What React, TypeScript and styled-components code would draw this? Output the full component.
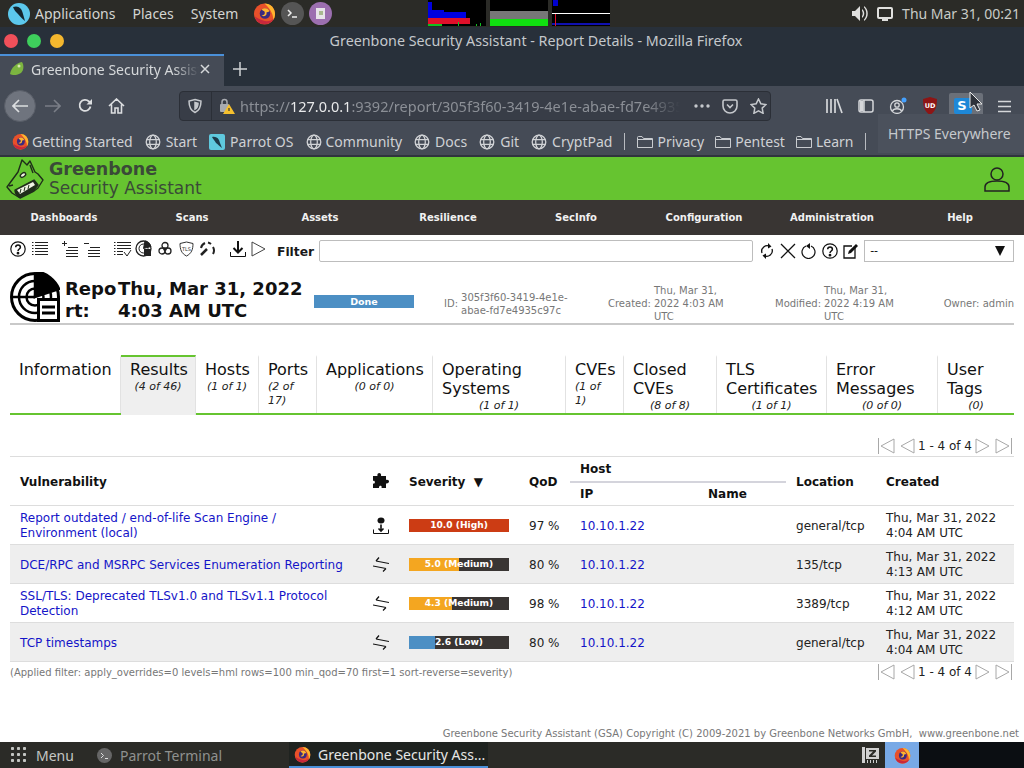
import React from 'react';
import styled, { createGlobalStyle } from 'styled-components';

const GlobalStyle = createGlobalStyle`
  html, body { margin: 0; padding: 0; background: #fff; }
  * { box-sizing: border-box; }
`;

const Screen = styled.div`
  position: relative;
  width: 1024px;
  height: 768px;
  overflow: hidden;
  display: flex;
  flex-direction: column;
  font-family: "DejaVu Sans", sans-serif;
`;

/* ---- desktop panel ---- */
const TopPanel = styled.div`
  height: 27px;
  flex: none;
  display: flex;
  align-items: center;
  background: #2b2b27;
  color: #d3d5d2;
  font: 14px "Noto Sans", sans-serif;
  padding-left: 8px;
`;
const PanelLabel = styled.span<{ $gap: number; $ml?: number }>`
  margin-right: ${p => p.$gap}px;
  margin-left: ${p => p.$ml ?? 0}px;
`;
const Launchers = styled.div`
  display: flex;
  align-items: center;
  gap: 5px;
  margin-left: 2px;
`;
const Graphs = styled.div`
  display: flex;
  gap: 4px;
  margin-left: 96px;
  align-self: flex-start;
`;
const Graph = styled.svg`
  display: block;
  width: 58px;
  height: 26px;
  background: #000;
`;
const PanelRight = styled.div`
  margin-left: auto;
  display: flex;
  align-items: center;
  gap: 9px;
  padding-right: 4px;
  color: #c9cbc8;
`;

/* ---- firefox window ---- */
const TitleBar = styled.div`
  height: 27px;
  flex: none;
  background: #28303a;
  display: flex;
  align-items: center;
  position: relative;
  padding-left: 4px;
  gap: 9px;
`;
const Dot = styled.span<{ $c: string }>`
  width: 14px;
  height: 14px;
  border-radius: 50%;
  background: ${p => p.$c};
`;
const WindowTitle = styled.div`
  position: absolute;
  left: 0;
  right: 0;
  top: 4px;
  text-align: center;
  padding-left: 48px;
  color: #c4c8cc;
  font: 14.3px "Noto Sans", sans-serif;
`;
const TabStrip = styled.div`
  height: 32px;
  flex: none;
  background: #28303a;
  display: flex;
  align-items: stretch;
`;
const BrowserTab = styled.div`
  width: 224px;
  background: #454b56;
  border-top: 2px solid #4a90d9;
  display: flex;
  align-items: center;
  padding: 0 0 4px 9px;
  color: #d5d8da;
  font: 14px "Noto Sans", sans-serif;
  white-space: nowrap;
  overflow: hidden;
`;
const TabLabel = styled.span`
  width: 168px;
  margin-left: 6px;
  overflow: hidden;
  -webkit-mask-image: linear-gradient(to right, #000 85%, transparent 100%);
  mask-image: linear-gradient(to right, #000 85%, transparent 100%);
`;
const NewTab = styled.div`
  display: flex;
  align-items: center;
  margin-left: 9px;
  padding-bottom: 2px;
`;
const NavBar = styled.div`
  height: 40px;
  flex: none;
  background: #454b56;
  display: flex;
  align-items: center;
  padding-left: 4px;
`;
const BackButton = styled.div`
  width: 32px;
  height: 32px;
  border-radius: 50%;
  background: #6f747e;
  border: 1px solid #585d67;
  display: flex;
  align-items: center;
  justify-content: center;
`;
const NavIcon = styled.div<{ $ml: number }>`
  margin-left: ${p => p.$ml}px;
  display: flex;
  align-items: center;
`;
const UrlBox = styled.div`
  margin-left: 54px;
  width: 592px;
  height: 30px;
  background: #383d47;
  border: 1px solid #2b2f37;
  border-radius: 4px;
  display: flex;
  align-items: center;
  padding-left: 7px;
`;
const UrlDivider = styled.span`
  width: 1px;
  height: 28px;
  background: #2b2f37;
  margin: 0 7px 0 8px;
`;
const UrlText = styled.div`
  margin-left: 5px;
  width: 440px;
  overflow: hidden;
  white-space: nowrap;
  font: 14.5px "Noto Sans", sans-serif;
  color: #8b8f96;
  -webkit-mask-image: linear-gradient(to right, #000 92%, transparent 100%);
  mask-image: linear-gradient(to right, #000 92%, transparent 100%);
  b { font-weight: 400; color: #e8e9ea; }
`;
const UrlActions = styled.div`
  display: flex;
  align-items: center;
  gap: 12px;
  margin-left: 14px;
  color: #c5c8cc;
`;
const ToolIcons = styled.div`
  margin-left: 47px;
  display: flex;
  align-items: center;
`;
const ToolIcon = styled.div<{ $ml?: number }>`
  width: 32px;
  height: 26px;
  margin-left: ${p => p.$ml ?? 0}px;
  display: flex;
  align-items: center;
  justify-content: center;
`;
const ActiveToolIcon = styled.div`
  width: 34px;
  height: 26px;
  margin-left: 3px;
  padding-left: 3px;
  display: flex;
  align-items: center;
  background: #6b7079;
  border-radius: 2px;
`;
const Bookmarks = styled.div`
  height: 31px;
  flex: none;
  background: #454b56;
  border-bottom: 2px solid #30343d;
  display: flex;
  align-items: center;
  padding: 2px 0 0 12px;
  color: #cfd1d4;
  font: 14px "Noto Sans", sans-serif;
  white-space: nowrap;
`;
const Bookmark = styled.div<{ $gap?: number; $mr?: number }>`
  display: flex;
  align-items: center;
  gap: ${p => p.$gap ?? 5}px;
  margin-right: ${p => p.$mr ?? 12}px;
`;
const BookmarkSep = styled.span`
  width: 1px;
  height: 17px;
  background: #b8bbc0;
  margin: 0 12px 0 0;
`;
const Tooltip = styled.div`
  position: absolute;
  left: 878px;
  top: 114px;
  width: 146px;
  height: 39px;
  background: #4b515c;
  color: #c6c9cd;
  font: 14px "Noto Sans", sans-serif;
  padding: 10px 0 0 10px;
`;
const Pointer = styled.svg`
  position: absolute;
  left: 969px;
  top: 91px;
`;

/* ---- GSA page ---- */
const Page = styled.div`
  flex: 1;
  min-height: 0;
  display: flex;
  flex-direction: column;
  background: #fff;
`;
const GsaHeader = styled.div`
  height: 43px;
  flex: none;
  background: #66c430;
  display: flex;
  align-items: center;
  padding: 0 14px 0 6px;
`;
const Brand = styled.div`
  margin-left: 5px;
  color: #3a4a38;
  line-height: 19px;
`;
const BrandTop = styled.div`
  font-size: 17.5px;
  font-weight: 700;
`;
const BrandBottom = styled.div`
  font-size: 17px;
`;
const UserSlot = styled.div`
  margin-left: auto;
  display: flex;
`;
const Menu = styled.div`
  height: 35px;
  flex: none;
  background: #393533;
  display: grid;
  grid-template-columns: repeat(8, 128px);
  align-items: center;
  text-align: center;
  color: #f1f1f1;
  font-size: 10px;
  font-weight: 700;
  padding-bottom: 1px;
`;
const Toolbar = styled.div`
  height: 33px;
  flex: none;
  display: flex;
  align-items: center;
  padding: 0 10px 1px;
`;
const ToolGroup = styled.div`
  display: flex;
  align-items: center;
  margin-bottom: 5px;
`;
const TbIcon = styled.div<{ $ml: number }>`
  margin-left: ${p => p.$ml}px;
  display: flex;
`;
const FilterLabel = styled.label`
  margin: 2px 0 0 11px;
  font-size: 12.3px;
  font-weight: 700;
  color: #1a1a1a;
`;
const FilterInput = styled.div`
  margin: 0 0 1px 5px;
  width: 434px;
  height: 22px;
  border: 1px solid #bdbdbd;
  border-radius: 2px;
  background: #fff;
`;
const FilterSelect = styled.div`
  margin: 0 0 1px 5px;
  flex: 1;
  height: 22px;
  border: 1px solid #bdbdbd;
  display: flex;
  align-items: center;
  justify-content: space-between;
  padding: 0 8px 0 5px;
  font-size: 11px;
`;
const ReportHead = styled.div`
  margin: 4px 10px 0;
  height: 53px;
  flex: none;
  border-bottom: 2px solid #c9c9c9;
  display: flex;
  align-items: center;
  padding-bottom: 1px;
`;
const HeadTitle = styled.div`
  display: flex;
  margin: 6px 0 0 5px;
  font-size: 18px;
  font-weight: 700;
  line-height: 22px;
  color: #111;
`;
const HeadWord = styled.div`
  width: 53px;
  word-break: break-all;
`;
const HeadDate = styled.div`
  width: 196px;
`;
const DoneBar = styled.div`
  width: 100px;
  height: 13px;
  background: #4c8fc4;
  color: #fff;
  font-size: 9.5px;
  font-weight: 700;
  line-height: 13px;
  text-align: center;
  margin-top: 8px;
`;
const MetaBlock = styled.div<{ $w: number; $ml: number }>`
  display: flex;
  align-items: center;
  width: ${p => p.$w}px;
  margin: 13px 0 0 ${p => p.$ml}px;
  gap: 3px;
  color: #777;
  font-size: 10px;
  line-height: 13px;
`;
const MetaValue = styled.div``;
const OwnerBlock = styled.div`
  margin: 13px 0 0 auto;
  white-space: nowrap;
  color: #777;
  font-size: 10px;
  line-height: 13px;
`;

const TabsRow = styled.div`
  margin: 30px 10px 0;
  height: 60px;
  flex: none;
  display: flex;
  border-bottom: 2px solid #66c430;
`;
const Tab = styled.div<{ $w: number; $active?: boolean; $last?: boolean }>`
  width: ${p => p.$w}px;
  flex: none;
  padding: 3px 4px 0 9px;
  margin-bottom: ${p => (p.$active ? '-2px' : '0')};
  font-size: 16px;
  line-height: 19px;
  color: #111;
  display: flex;
  flex-direction: column;
  border-right: ${p => (p.$last ? 'none' : '1px solid #e2e2e2')};
  background: ${p => (p.$active ? '#efefef' : 'transparent')};
  border-top: ${p => (p.$active ? '2px solid #66c430' : '2px solid transparent')};
`;
const TabCount = styled.div<{ $left?: boolean }>`
  font-size: 11px;
  font-style: italic;
  line-height: 14px;
  color: #222;
  text-align: ${p => (p.$left ? 'left' : 'center')};
  margin: 1px 5px 0 0;
`;
const Pager = styled.div<{ $mt: number }>`
  margin: ${p => p.$mt}px 12px 0 0;
  display: flex;
  justify-content: flex-end;
  align-items: center;
  height: 20px;
  flex: none;
  font-size: 12px;
  color: #222;
  gap: 1px;
`;
const PagerGap = styled.span`
  width: 3px;
`;
const PagerText = styled.span`
  margin: 0 2px;
`;
const Table = styled.table`
  margin: 0 10px;
  width: 1004px;
  flex: none;
  table-layout: fixed;
  border-collapse: collapse;
  font-size: 12px;
  color: #222;
  border-top: 1px solid #ddd;
`;
const Th = styled.th<{ $top?: number; $left?: number }>`
  padding: ${p => p.$top ?? 0}px 0 0 ${p => p.$left ?? 10}px;
  text-align: left;
  font-size: 12px;
  font-weight: 700;
  color: #111;
`;
const HostTh = styled(Th)`
  border-bottom: 2px solid #d4d4dc;
  height: 25px;
`;
const HeadRow = styled.tr`
  height: 24px;
`;
const BodyRow = styled.tr<{ $alt?: boolean; $h: number }>`
  height: ${p => p.$h}px;
  background: ${p => (p.$alt ? '#eeeeee' : '#fff')};
  border-top: 1px solid #ddd;
  border-bottom: 1px solid #ddd;
`;
const Td = styled.td`
  padding: 2px 0 0 10px;
  line-height: 15px;
`;
const NameTd = styled(Td)`
  padding-right: 14px;
`;
const SevTd = styled(Td)`
  padding-top: 0;
`;
const IconTd = styled(Td)`
  padding: 0 0 0 11px;
  vertical-align: middle;
  svg { display: block; }
`;
const Link = styled.span`
  color: #1414c8;
`;
const SevTrack = styled.div`
  position: relative;
  width: 100px;
  height: 13px;
  background: #393533;
`;
const SevFill = styled.div<{ $c: string }>`
  height: 100%;
  background: ${p => p.$c};
`;
const SevText = styled.div`
  position: absolute;
  inset: 0;
  text-align: center;
  color: #fff;
  font-size: 9.1px;
  font-weight: 700;
  line-height: 13px;
`;
const BottomRow = styled.div`
  display: flex;
  align-items: center;
  justify-content: space-between;
  flex: none;
  height: 20px;
`;
const Applied = styled.div`
  margin-left: 10px;
  font-size: 10px;
  color: #777;
`;
const PageFooter = styled.div`
  margin-top: auto;
  text-align: right;
  padding: 0 5px 3px 0;
  font-size: 10px;
  color: #787878;
`;

/* ---- task bar ---- */
const Taskbar = styled.div`
  height: 26px;
  flex: none;
  background: #2b2b27;
  display: flex;
  align-items: center;
  color: #c4c6c3;
  font: 14px "Noto Sans", sans-serif;
`;
const TaskMenu = styled.div`
  display: flex;
  align-items: center;
  gap: 9px;
  padding-left: 11px;
  width: 92px;
`;
const TaskItem = styled.div<{ $active?: boolean; $w: number }>`
  width: ${p => p.$w}px;
  height: 26px;
  display: flex;
  align-items: center;
  gap: ${p => (p.$active ? 7 : 8)}px;
  padding-left: 5px;
  background: ${p => (p.$active ? '#1f2320' : 'transparent')};
  border-bottom: ${p => (p.$active ? '2px solid #4a90d9' : 'none')};
  color: ${p => (p.$active ? '#e6e7e6' : '#8f918f')};
`;
const Tray = styled.div`
  margin-left: auto;
  display: flex;
  align-items: center;
  height: 26px;
`;
const TrayFox = styled.div`
  width: 34px;
  height: 26px;
  background: #78a9e6;
  display: flex;
  align-items: center;
  justify-content: center;
  margin-left: 5px;
`;
const TrayRest = styled.div`
  width: 105px;
  height: 26px;
  background: #0b0e12;
`;

/* ---- drawings ---- */
const Firefox = ({ s = 24 }: { s?: number }) => (
  <svg width={s} height={s} viewBox="0 0 24 24">
    <circle cx="12" cy="12.5" r="11" fill="#e8502a" />
    <path d="M12 1.5c6.5 0 11 5 11 11 0 3-1 5-2 6.5 .6-5-2-11-9-17.500z" fill="#ffb52e" />
    <path d="M2 15c1 5 5 8 10 8s8-2 10-6c-3 3-8 4-12 2-3-1-5-2-8-4z" fill="#c8283c" />
    <circle cx="12.500" cy="12" r="5.500" fill="#3b2a7e" />
    <path d="M9 8c3-3 8-1 8 2l-3 1c1 3-2 5-5 3 3 0 4-2 3-4z" fill="#ffb52e" />
  </svg>
);

const Globe = () => (
  <svg width="16" height="16" viewBox="0 0 16 16" fill="none" stroke="#d0d2d5" strokeWidth="1.300">
    <circle cx="8" cy="8" r="6.800" />
    <ellipse cx="8" cy="8" rx="3.300" ry="6.800" />
    <path d="M1.500 5.600h13M1.500 10.400h13" />
  </svg>
);

const Folder = () => (
  <svg width="16" height="14" viewBox="0 0 16 14" fill="none" stroke="#c9ccd0" strokeWidth="1">
    <path d="M.5 12.500V2.500q0-1 1-1h3.500l1.500 2h9v9z" />
    <path d="M.5 4.500h15" />
  </svg>
);

const ParrotTile = () => (
  <svg width="16" height="16" viewBox="0 0 16 16">
    <rect width="16" height="16" rx="2" fill="#5fc9de" />
    <path d="M3 3c4-1 7 1 8 6l2 5c-3-2-4-4-6-5-1-2-3-4-4-6z" fill="#1d3a4a" />
  </svg>
);

const Shield = ({ c = '#c5c8cc' }: { c?: string }) => (
  <svg width="16" height="16" viewBox="0 0 16 16" fill="none" stroke={c} strokeWidth="1.500">
    <path d="M8 1.500l6 1.500c0 6-1.500 9.500-6 11.500C3.500 12.500 2 9 2 3z" />
    <path d="M8 4.500l3 .8c0 3-.8 4.700-3 5.900z" fill={c} />
  </svg>
);

const ListLines = () => (
  <svg width="16" height="16" viewBox="0 0 16 16" stroke="#222" strokeWidth="1">
    {[1.500, 4.500, 7.500, 10.500, 13.500].map(y => (
      <path key={y} d={`M0 ${y}h1.500M3 ${y}H16`} />
    ))}
  </svg>
);

const Help = () => (
  <svg width="16" height="16" viewBox="0 0 16 16" fill="none" stroke="#111" strokeWidth="1.200">
    <circle cx="8" cy="8" r="7.200" />
    <path d="M5.700 6.200c0-3 4.700-3 4.700 0 0 1.800-2.400 1.800-2.400 3.800" strokeWidth="1.500" />
    <circle cx="8" cy="12.200" r=".8" fill="#111" />
  </svg>
);

const PlusMinusList = ({ sign }: { sign: '+' | '-' }) => (
  <svg width="16" height="16" viewBox="0 0 16 16" stroke="#222" strokeWidth="1" fill="none">
    <path d={sign === '+' ? 'M0 2.500h5M2.500 0v5' : 'M0 2.500h5'} />
    {[6.500, 9.500, 12.500, 15.500].map(y => (
      <path key={y} d={`M${y < 8 ? 6 : 4} ${y}H16`} />
    ))}
  </svg>
);

const PuzzleIcon = () => (
  <svg width="16" height="16" viewBox="0 0 16 16" fill="#111">
    <path d="M0 4h4.500c-1-4 4.500-4 3.500 0H13v4c4-1 4 4 0 3.500V16H8.500c1-3-3-3-2.500 0H0v-4.500c2.500 1 2.500-3.500 0-2.500z" />
  </svg>
);

const LocalIcon = () => (
  <svg width="16" height="17" viewBox="0 0 16 17" fill="none" stroke="#111">
    <ellipse cx="8" cy="3.500" rx="3.500" ry="3" fill="#111" stroke="none" />
    <path d="M8 7.500v6M5.500 11.500L8 14l2.500-2.500" strokeWidth="1.600" />
    <path d="M.5 12.500v4h15v-4" />
  </svg>
);

const ExchangeIcon = () => (
  <svg width="16" height="15" viewBox="0 0 16 15" fill="none" stroke="#111" strokeWidth="1.200">
    <path d="M3 4l13 2.500M3 4l3-3.500M0 9l13 2.500M13 11.500l-3 3" />
  </svg>
);

const Triangle = ({ dir, bar }: { dir: 'l' | 'r'; bar?: boolean }) => (
  <svg width={bar ? 17 : 15} height="16" viewBox={`0 0 ${bar ? 17 : 15} 16`} fill="none" stroke="#a8a8a8">
    {dir === 'l' ? (
      <>
        {bar && <path d="M.5 0v16" />}
        <path d={`M${bar ? 16 : 14} 1L${bar ? 3 : 1} 8l13 7z`} />
      </>
    ) : (
      <>
        <path d="M1 1l13 7-13 7z" />
        {bar && <path d="M16.500 0v16" />}
      </>
    )}
  </svg>
);

const WolfLogo = () => (
  <svg width="38" height="40" viewBox="0 0 38 40" fill="none" stroke="#1f2d1a" strokeWidth="1.400" strokeLinejoin="round">
    <path d="M1 28L12 13 16 1l5 5 3-4 5 11 3 2 5 6-5 8-4 3-14 7-8-5z" fill="#66c430" />
    <path d="M9 31l19-10 4 5-5 6-14 6c-3-2-4-4-4-7z" fill="#1f2d1a" />
    <path d="M11 31l16-8 2 3-15 9z" fill="#f0f4e4" stroke="none" />
    <path d="M14 34l1-4M18 32l1-4M22 30l1-4" stroke="#1f2d1a" strokeWidth="1" />
    <ellipse cx="17" cy="16" rx="3" ry="1.800" fill="#f0f4e4" transform="rotate(-35 17 16)" />
    <path d="M3 27l4-1M24 6l3 8" />
  </svg>
);

const ReportIcon = () => (
  <svg width="50" height="50" viewBox="0 0 50 50" fill="none" stroke="#000" strokeWidth="2.500">
    <circle cx="25" cy="25" r="23.500" strokeWidth="3" />
    <circle cx="25" cy="25" r="16" />
    <circle cx="25" cy="25" r="8.500" />
    <path d="M1 25h24M25 1v24" />
    <path d="M25 25L27 0c9 0 19 9 22 17z" fill="#000" />
    <rect x="27" y="26" width="23" height="24" fill="#000" stroke="none" />
    <rect x="30" y="29" width="17" height="18" fill="#fff" stroke="none" />
    <path d="M32 35h13M32 41h13" strokeWidth="3" />
  </svg>
);

const severities = [
  { label: '10.0 (High)', pct: 100, color: '#cc3c14' },
  { label: '5.0 (Medium)', pct: 50, color: '#f4a620' },
  { label: '4.3 (Medium)', pct: 43, color: '#f4a620' },
  { label: '2.6 (Low)', pct: 26, color: '#4c8fc4' },
];

const rows = [
  {
    name: 'Report outdated / end-of-life Scan Engine / Environment (local)',
    local: true, qod: '97 %', loc: 'general/tcp', time: '4:04 AM UTC', h: 39,
  },
  {
    name: 'DCE/RPC and MSRPC Services Enumeration Reporting',
    qod: '80 %', loc: '135/tcp', time: '4:13 AM UTC', h: 39,
  },
  {
    name: 'SSL/TLS: Deprecated TLSv1.0 and TLSv1.1 Protocol Detection',
    qod: '98 %', loc: '3389/tcp', time: '4:12 AM UTC', h: 39,
  },
  {
    name: 'TCP timestamps',
    qod: '80 %', loc: 'general/tcp', time: '4:04 AM UTC', h: 39,
  },
];

const tabs = [
  { t: 'Information', w: 111 },
  { t: 'Results', c: '(4 of 46)', w: 75, active: true },
  { t: 'Hosts', c: '(1 of 1)', w: 63 },
  { t: 'Ports', c: '(2 of 17)', w: 58, left: true },
  { t: 'Applications', c: '(0 of 0)', w: 116 },
  { t: 'Operating Systems', c: '(1 of 1)', w: 133 },
  { t: 'CVEs', c: '(1 of 1)', w: 58, left: true },
  { t: 'Closed CVEs', c: '(8 of 8)', w: 93 },
  { t: 'TLS Certificates', c: '(1 of 1)', w: 110 },
  { t: 'Error Messages', c: '(0 of 0)', w: 111 },
  { t: 'User Tags', c: '(0)', w: 76, last: true },
];

const menuItems = ['Dashboards', 'Scans', 'Assets', 'Resilience', 'SecInfo', 'Configuration', 'Administration', 'Help'];

const PagerBar = ({ mt }: { mt: number }) => (
  <Pager $mt={mt}>
    <Triangle dir="l" bar />
    <PagerGap />
    <Triangle dir="l" />
    <PagerText>1 - 4 of 4</PagerText>
    <Triangle dir="r" />
    <PagerGap />
    <Triangle dir="r" bar />
  </Pager>
);

const App: React.FC = () => {
  return (
    <Screen>
      <GlobalStyle />
      <TopPanel>
        <svg width="22" height="22" viewBox="0 0 22 22">
          <circle cx="11" cy="11" r="11" fill="#5cc8ec" />
          <path d="M5 4c5-2 9 1 10 7l2 7c-3-2-5-5-7-7C8 9 6 7 5 4z" fill="#15252e" />
        </svg>
        <PanelLabel $gap={17} $ml={5}>Applications</PanelLabel>
        <PanelLabel $gap={17}>Places</PanelLabel>
        <PanelLabel $gap={13}>System</PanelLabel>
        <Launchers>
          <Firefox s={23} />
          <svg width="23" height="23" viewBox="0 0 23 23" fill="none">
            <circle cx="11.500" cy="11.500" r="11.500" fill="#555" />
            <path d="M7 8l3 3-3 3M11 15h5" stroke="#eee" strokeWidth="1.500" />
          </svg>
          <svg width="23" height="23" viewBox="0 0 23 23">
            <circle cx="11.500" cy="11.500" r="11.500" fill="#9c6fb0" />
            <rect x="7" y="6" width="9" height="11" fill="#e8e4ea" />
            <rect x="10" y="9" width="4" height="4" fill="#a8b890" />
          </svg>
        </Launchers>
        <Graphs>
          <Graph viewBox="0 0 58 26">
            <path d="M0 2h4v8h12v2h22v6H0z" fill="#0000e0" />
            <path d="M0 18h42v6H0z" fill="#e0102a" />
            <path d="M0 24h14v2H0zM30 22h1v4h-1zM48 24h1v2h-1zM52 23h1v3h-1z" fill="#10c020" />
          </Graph>
          <Graph viewBox="0 0 58 26">
            <path d="M0 11h58v8H0z" fill="#777" />
            <path d="M0 19h58v7H0z" fill="#10e010" />
          </Graph>
          <Graph viewBox="0 0 58 26">
            <path d="M1 0h5v6H1z" fill="#0000d0" />
            <path d="M0 13h58v1H0z" fill="#fff" />
            <path d="M0 23h58v2H0z" fill="#1010b0" />
            <path d="M3 14h1v12H3z" fill="#e0102a" />
          </Graph>
        </Graphs>
        <PanelRight>
          <svg width="16" height="15" viewBox="0 0 16 15" fill="#e0e0de">
            <path d="M0 5h3l5-5v15l-5-5H0z" />
            <path d="M10 3c3 2 3 7 0 9v-2c1-1 1-4 0-5z" />
            <path d="M12 0c5 3 5 12 0 15v-1.500c3-3 3-9 0-12z" />
          </svg>
          <svg width="16" height="14" viewBox="0 0 16 14" fill="none" stroke="#e0e0de" strokeWidth="2">
            <rect x="1" y="1" width="14" height="10" rx="1" />
            <path d="M5 13h6" />
          </svg>
          <span>Thu Mar 31, 00:21</span>
        </PanelRight>
      </TopPanel>

      <TitleBar>
        <Dot $c="#f0505a" />
        <Dot $c="#3ecf5c" />
        <Dot $c="#f4b72e" />
        <WindowTitle>Greenbone Security Assistant - Report Details - Mozilla Firefox</WindowTitle>
      </TitleBar>

      <TabStrip>
        <BrowserTab>
          <svg width="16" height="16" viewBox="0 0 16 16">
            <path d="M1 13C2 7 7 2 13 1c2 3 2 8-1 11-3 2-8 3-11 1z" fill="#7cb540" />
            <circle cx="10" cy="5" r="1.500" fill="#d8e8b0" />
          </svg>
          <TabLabel>Greenbone Security Assistant</TabLabel>
          <svg width="12" height="12" viewBox="0 0 12 12" stroke="#d5d8da" strokeWidth="1.500">
            <path d="M2 2l8 8M10 2l-8 8" />
          </svg>
        </BrowserTab>
        <NewTab>
          <svg width="14" height="14" viewBox="0 0 14 14" stroke="#cfd2d5" strokeWidth="1.500">
            <path d="M7 0v14M0 7h14" />
          </svg>
        </NewTab>
      </TabStrip>

      <NavBar>
        <BackButton>
          <svg width="16" height="14" viewBox="0 0 16 14" fill="none" stroke="#dcdee0" strokeWidth="1.700">
            <path d="M16 7H1M7 1L1 7l6 6" />
          </svg>
        </BackButton>
        <NavIcon $ml={9}>
          <svg width="16" height="14" viewBox="0 0 16 14" fill="none" stroke="#7a7e87" strokeWidth="1.600">
            <path d="M0 7h15M9 1l6 6-6 6" />
          </svg>
        </NavIcon>
        <NavIcon $ml={16}>
          <svg width="16" height="16" viewBox="0 0 16 16" fill="none" stroke="#dcdee0" strokeWidth="1.800">
            <path d="M13.500 8.500A5.500 5.500 0 1 1 12 3.500L14 5.500" />
            <path d="M15 1v5.500H9.500z" fill="#dcdee0" stroke="none" />
          </svg>
        </NavIcon>
        <NavIcon $ml={15}>
          <svg width="17" height="16" viewBox="0 0 17 16" fill="none" stroke="#dcdee0" strokeWidth="1.600">
            <path d="M1 8l7.500-7L16 8M3.500 6.500V15h3.500v-5h3v5h3.500V6.500" />
          </svg>
        </NavIcon>
        <UrlBox>
          <Shield />
          <UrlDivider />
          <svg width="16" height="16" viewBox="0 0 16 16">
            <rect x="1" y="6" width="9" height="8" rx="1" fill="#a8abb0" />
            <path d="M3 6V4a2.500 2.500 0 0 1 5 0v2" fill="none" stroke="#a8abb0" strokeWidth="1.500" />
            <path d="M10 6l6 10H4z" fill="#f5c02e" />
            <path d="M10 10v3" stroke="#333" strokeWidth="1.200" />
          </svg>
          <UrlText>
            https://<b>127.0.0.1</b>:9392/report/305f3f60-3419-4e1e-abae-fd7e4935c97c
          </UrlText>
          <UrlActions>
            <svg width="16" height="4" viewBox="0 0 16 4" fill="#c5c8cc">
              <circle cx="2" cy="2" r="1.700" />
              <circle cx="8" cy="2" r="1.700" />
              <circle cx="14" cy="2" r="1.700" />
            </svg>
            <svg width="16" height="15" viewBox="0 0 16 15" fill="none" stroke="#c5c8cc" strokeWidth="1.600">
              <path d="M1 2.500q0-1.500 1.500-1.500h11q1.500 0 1.500 1.500V7a7 7 0 0 1-14 0z" />
              <path d="M5 5.500L8 8.500l3-3" />
            </svg>
            <svg width="17" height="16" viewBox="0 0 17 16" fill="none" stroke="#c5c8cc" strokeWidth="1.500">
              <path d="M8.500 1l2.300 4.700 5.200.8-3.800 3.600.9 5.200-4.600-2.500-4.600 2.500.9-5.200L1 6.500l5.200-.8z" />
            </svg>
          </UrlActions>
        </UrlBox>
        <ToolIcons>
          <ToolIcon>
            <svg width="18" height="16" viewBox="0 0 18 16" stroke="#d5d7da" strokeWidth="1.700">
              <path d="M2 1v14M6 1v14M10 1v14M12 1l5 14" />
            </svg>
          </ToolIcon>
          <ToolIcon>
            <svg width="16" height="14" viewBox="0 0 16 14" fill="none" stroke="#d5d7da" strokeWidth="1.500">
              <rect x="1" y="1" width="14" height="12" rx="2" />
              <path d="M6 1v12" />
              <path d="M2 2h3.500v10H2z" fill="#d5d7da" stroke="none" />
            </svg>
          </ToolIcon>
          <ToolIcon>
            <svg width="18" height="18" viewBox="0 0 18 18" fill="none" stroke="#d5d7da" strokeWidth="1.300">
              <circle cx="8" cy="10" r="6.500" />
              <circle cx="8" cy="8" r="2.200" />
              <path d="M3.500 14c1-3 8-3 9 0" />
              <circle cx="15" cy="3" r="2.500" fill="#45a1ff" stroke="none" />
            </svg>
          </ToolIcon>
          <ToolIcon>
            <svg width="16" height="18" viewBox="0 0 16 18">
              <path d="M1 2l7-2 7 2c0 8-2 13-7 16C3 15 1 10 1 2z" fill="#8e1515" />
              <text x="8" y="11" textAnchor="middle" fontSize="6.500" fontWeight="700" fill="#fff" fontFamily="DejaVu Sans">UD</text>
            </svg>
          </ToolIcon>
          <ActiveToolIcon>
            <svg width="22" height="20" viewBox="0 0 22 20">
              <rect x="2" y="2" width="18" height="16" rx="2" fill="#1e88d8" />
              <text x="10" y="14" textAnchor="middle" fontSize="13" fontWeight="700" fill="#fff" fontFamily="DejaVu Sans">S</text>
            </svg>
          </ActiveToolIcon>
          <ToolIcon $ml={5}>
            <svg width="15" height="13" viewBox="0 0 15 13" stroke="#d5d7da" strokeWidth="1.700">
              <path d="M1 1.500h13M1 6.500h13M1 11.500h13" />
            </svg>
          </ToolIcon>
        </ToolIcons>
      </NavBar>

      <Bookmarks>
        <Bookmark $gap={3}>
          <Firefox s={17} />
          Getting Started
        </Bookmark>
        <Bookmark><Globe />Start</Bookmark>
        <Bookmark><ParrotTile />Parrot OS</Bookmark>
        <Bookmark $gap={4}><Globe />Community</Bookmark>
        <Bookmark><Globe />Docs</Bookmark>
        <Bookmark><Globe />Git</Bookmark>
        <Bookmark><Globe />CryptPad</Bookmark>
        <BookmarkSep />
        <Bookmark $gap={4} $mr={11}><Folder />Privacy</Bookmark>
        <Bookmark $gap={4} $mr={11}><Folder />Pentest</Bookmark>
        <Bookmark $gap={4}><Folder />Learn</Bookmark>
        <BookmarkSep />
      </Bookmarks>

      <Page>
        <GsaHeader>
          <WolfLogo />
          <Brand>
            <BrandTop>Greenbone</BrandTop>
            <BrandBottom>Security Assistant</BrandBottom>
          </Brand>
          <UserSlot>
            <svg width="26" height="26" viewBox="0 0 26 26" fill="none" stroke="#222" strokeWidth="1.500">
              <circle cx="13" cy="8" r="6" />
              <path d="M1 25v-4c0-4 5-6 12-6s12 2 12 6v4z" />
            </svg>
          </UserSlot>
        </GsaHeader>

        <Menu>
          {menuItems.map(m => <div key={m}>{m}</div>)}
        </Menu>

        <Toolbar>
          <ToolGroup>
            <Help />
            <TbIcon $ml={6}><ListLines /></TbIcon>
            <TbIcon $ml={14}><PlusMinusList sign="+" /></TbIcon>
            <TbIcon $ml={6}><PlusMinusList sign="-" /></TbIcon>
            <TbIcon $ml={14}>
              <svg width="18" height="16" viewBox="0 0 18 16" fill="none" stroke="#222">
                {[1.500, 4.500, 7.500].map(y => <path key={y} d={`M0 ${y}h1.500M3 ${y}H17`} />)}
                <path d="M0 10.500h1.500M3 10.500h6M0 13.500h1.500M3 13.500h6M10 11l3 4 4-6" />
              </svg>
            </TbIcon>
            <TbIcon $ml={3}>
              <svg width="17" height="17" viewBox="0 0 17 17" fill="none" stroke="#222">
                <circle cx="8.500" cy="8.500" r="7.500" strokeWidth="1.300" />
                <circle cx="8.500" cy="8.500" r="4.500" />
                <path d="M8.500 8.500L10 1c3 .5 5 3 6 5.500z" fill="#222" />
                <rect x="9" y="9" width="7" height="7" fill="#222" stroke="none" />
              </svg>
            </TbIcon>
            <TbIcon $ml={6}>
              <svg width="14" height="15" viewBox="0 0 14 15" fill="none" stroke="#222" strokeWidth="1.300">
                <circle cx="7" cy="4.500" r="3" />
                <circle cx="4" cy="10" r="3" />
                <circle cx="10" cy="10" r="3" />
                <circle cx="7" cy="8" r="1.200" fill="#222" />
              </svg>
            </TbIcon>
            <TbIcon $ml={7}>
              <svg width="15" height="16" viewBox="0 0 15 16" fill="none" stroke="#333">
                <path d="M7.500 1l6.500 1.500c0 6-1.500 10-6.500 12.500C2.500 12.500 1 8.500 1 2.500z" />
                <text x="7.500" y="9.500" textAnchor="middle" fontSize="5" stroke="none" fill="#333" fontFamily="DejaVu Sans">TLS</text>
              </svg>
            </TbIcon>
            <TbIcon $ml={5}>
              <svg width="16" height="16" viewBox="0 0 16 16" fill="none" stroke="#222" strokeWidth="2">
                <path d="M2 7a7 7 0 0 1 4-5M9 1.500a7 7 0 0 1 3 1.500M14 6a7 7 0 0 1 0 7" />
                <path d="M2 14l6-6" strokeWidth="2.500" />
              </svg>
            </TbIcon>
            <TbIcon $ml={15}>
              <svg width="16" height="16" viewBox="0 0 16 16" fill="none" stroke="#111">
                <path d="M8 0v11M3.500 7L8 11.500 12.500 7" strokeWidth="2" />
                <path d="M.5 11v4.500h15V11" />
              </svg>
            </TbIcon>
            <TbIcon $ml={5}>
              <svg width="15" height="16" viewBox="0 0 15 16" fill="none" stroke="#444">
                <path d="M1 1l13 7-13 7z" />
              </svg>
            </TbIcon>
          </ToolGroup>
          <FilterLabel>Filter</FilterLabel>
          <FilterInput />
          <TbIcon $ml={6}>
            <svg width="16" height="16" viewBox="0 0 16 16" fill="none" stroke="#111" strokeWidth="1.300">
              <path d="M3 10a5.500 5.500 0 0 1 8-6.500M13 6a5.500 5.500 0 0 1-8 6.500" />
              <path d="M9 0l3.500 3.500L9 5.500M7 16l-3.500-3.500L7 10.500" fill="#111" stroke="none" />
            </svg>
          </TbIcon>
          <TbIcon $ml={5}>
            <svg width="16" height="16" viewBox="0 0 16 16" stroke="#111" strokeWidth="1.300">
              <path d="M1 1l14 14M15 1L1 15" />
            </svg>
          </TbIcon>
          <TbIcon $ml={5}>
            <svg width="16" height="16" viewBox="0 0 16 16" fill="none" stroke="#111" strokeWidth="1.200">
              <path d="M5 3a6.500 6.500 0 1 0 5 0" />
              <path d="M9 0L5 3l4 3" fill="#111" stroke="none" />
            </svg>
          </TbIcon>
          <TbIcon $ml={5}><Help /></TbIcon>
          <TbIcon $ml={5}>
            <svg width="16" height="16" viewBox="0 0 16 16" fill="none" stroke="#111" strokeWidth="1.300">
              <path d="M12 4v11H1V3h8" />
              <path d="M5 11l.8-3L13 1l2 2-7 7z" fill="#111" stroke="none" />
            </svg>
          </TbIcon>
          <FilterSelect>
            <span>--</span>
            <svg width="10" height="10" viewBox="0 0 10 10"><path d="M0 0h10L5 10z" fill="#111" /></svg>
          </FilterSelect>
        </Toolbar>

        <ReportHead>
          <ReportIcon />
          <HeadTitle>
            <HeadWord>Report:</HeadWord>
            <HeadDate>Thu, Mar 31, 2022 4:03 AM UTC</HeadDate>
          </HeadTitle>
          <DoneBar>Done</DoneBar>
          <MetaBlock $w={130} $ml={30}>
            <span>ID:</span>
            <MetaValue>305f3f60-3419-4e1e-abae-fd7e4935c97c</MetaValue>
          </MetaBlock>
          <MetaBlock $w={126} $ml={34}>
            <span>Created:</span>
            <MetaValue>Thu, Mar 31, 2022 4:03 AM UTC</MetaValue>
          </MetaBlock>
          <MetaBlock $w={126} $ml={41}>
            <span>Modified:</span>
            <MetaValue>Thu, Mar 31, 2022 4:19 AM UTC</MetaValue>
          </MetaBlock>
          <OwnerBlock>Owner: admin</OwnerBlock>
        </ReportHead>

        <TabsRow>
          {tabs.map(t => (
            <Tab key={t.t} $w={t.w} $active={t.active} $last={t.last}>
              <div>{t.t}</div>
              {t.c && <TabCount $left={t.left}>{t.c}</TabCount>}
            </Tab>
          ))}
        </TabsRow>

        <PagerBar mt={21} />

        <Table>
          <colgroup>
            <col style={{ width: 352 }} />
            <col style={{ width: 37 }} />
            <col style={{ width: 120 }} />
            <col style={{ width: 51 }} />
            <col style={{ width: 128 }} />
            <col style={{ width: 88 }} />
            <col style={{ width: 90 }} />
            <col style={{ width: 138 }} />
          </colgroup>
          <thead>
            <HeadRow>
              <Th rowSpan={2} $top={2}>Vulnerability</Th>
              <Th rowSpan={2} $left={11}><PuzzleIcon /></Th>
              <Th rowSpan={2} $top={2}>Severity&nbsp;&nbsp;▼</Th>
              <Th rowSpan={2} $top={2}>QoD</Th>
              <HostTh colSpan={2}>Host</HostTh>
              <Th rowSpan={2} $top={2}>Location</Th>
              <Th rowSpan={2} $top={2}>Created</Th>
            </HeadRow>
            <HeadRow>
              <Th>IP</Th>
              <Th>Name</Th>
            </HeadRow>
          </thead>
          <tbody>
            {rows.map((r, i) => (
              <BodyRow key={r.name} $alt={i % 2 === 1} $h={r.h}>
                <NameTd><Link>{r.name}</Link></NameTd>
                <IconTd>{r.local ? <LocalIcon /> : <ExchangeIcon />}</IconTd>
                <SevTd>
                  <SevTrack>
                    <SevFill $c={severities[i].color} style={{ width: `${severities[i].pct}%` }} />
                    <SevText>{severities[i].label}</SevText>
                  </SevTrack>
                </SevTd>
                <Td>{r.qod}</Td>
                <Td><Link>10.10.1.22</Link></Td>
                <Td />
                <Td>{r.loc}</Td>
                <Td>Thu, Mar 31, 2022<br />{r.time}</Td>
              </BodyRow>
            ))}
          </tbody>
        </Table>

        <BottomRow>
          <Applied>(Applied filter: apply_overrides=0 levels=hml rows=100 min_qod=70 first=1 sort-reverse=severity)</Applied>
          <PagerBar mt={0} />
        </BottomRow>

        <PageFooter>Greenbone Security Assistant (GSA) Copyright (C) 2009-2021 by Greenbone Networks GmbH,&nbsp; www.greenbone.net</PageFooter>
      </Page>

      <Taskbar>
        <TaskMenu>
          <svg width="16" height="16" viewBox="0 0 16 16" fill="#c4c6c3">
            {[1, 7, 13].flatMap(y => [1, 7, 13].map(x => <rect key={`${x}${y}`} x={x - 1} y={y - 1} width="3" height="3" rx=".8" />))}
          </svg>
          <span>Menu</span>
        </TaskMenu>
        <TaskItem $w={197}>
          <svg width="15" height="15" viewBox="0 0 15 15" fill="none">
            <circle cx="7.500" cy="7.500" r="7.500" fill="#666" />
            <path d="M4 5l2.500 2.500L4 10M8 10.500h3" stroke="#ddd" />
          </svg>
          <span>Parrot Terminal</span>
        </TaskItem>
        <TaskItem $w={199} $active>
          <Firefox s={17} />
          <span>Greenbone Security Ass...</span>
        </TaskItem>
        <Tray>
          <svg width="18" height="16" viewBox="0 0 18 16" fill="#d0d0d0">
            <path d="M0 0h3v16H0z" />
            <path d="M4 1h13v11H4z" />
            <path d="M7 3h7v1.500l-4 4h4V10H7V8.500l4-4H7z" fill="#2b2b27" />
            <path d="M5 13h1v3H5zM8 13h1v3H8zM11 13h1v3h-1zM14 13h1v3h-1z" />
          </svg>
          <TrayFox><Firefox s={17} /></TrayFox>
          <TrayRest />
        </Tray>
      </Taskbar>

      <Tooltip>HTTPS Everywhere</Tooltip>
      <Pointer width="14" height="22" viewBox="0 0 14 22">
        <path d="M1 1v16l4-3 3 6 3-1-3-6h5z" fill="#2e323a" stroke="#e8e8e8" strokeWidth="1" />
      </Pointer>
    </Screen>
  );
};

export default App;
